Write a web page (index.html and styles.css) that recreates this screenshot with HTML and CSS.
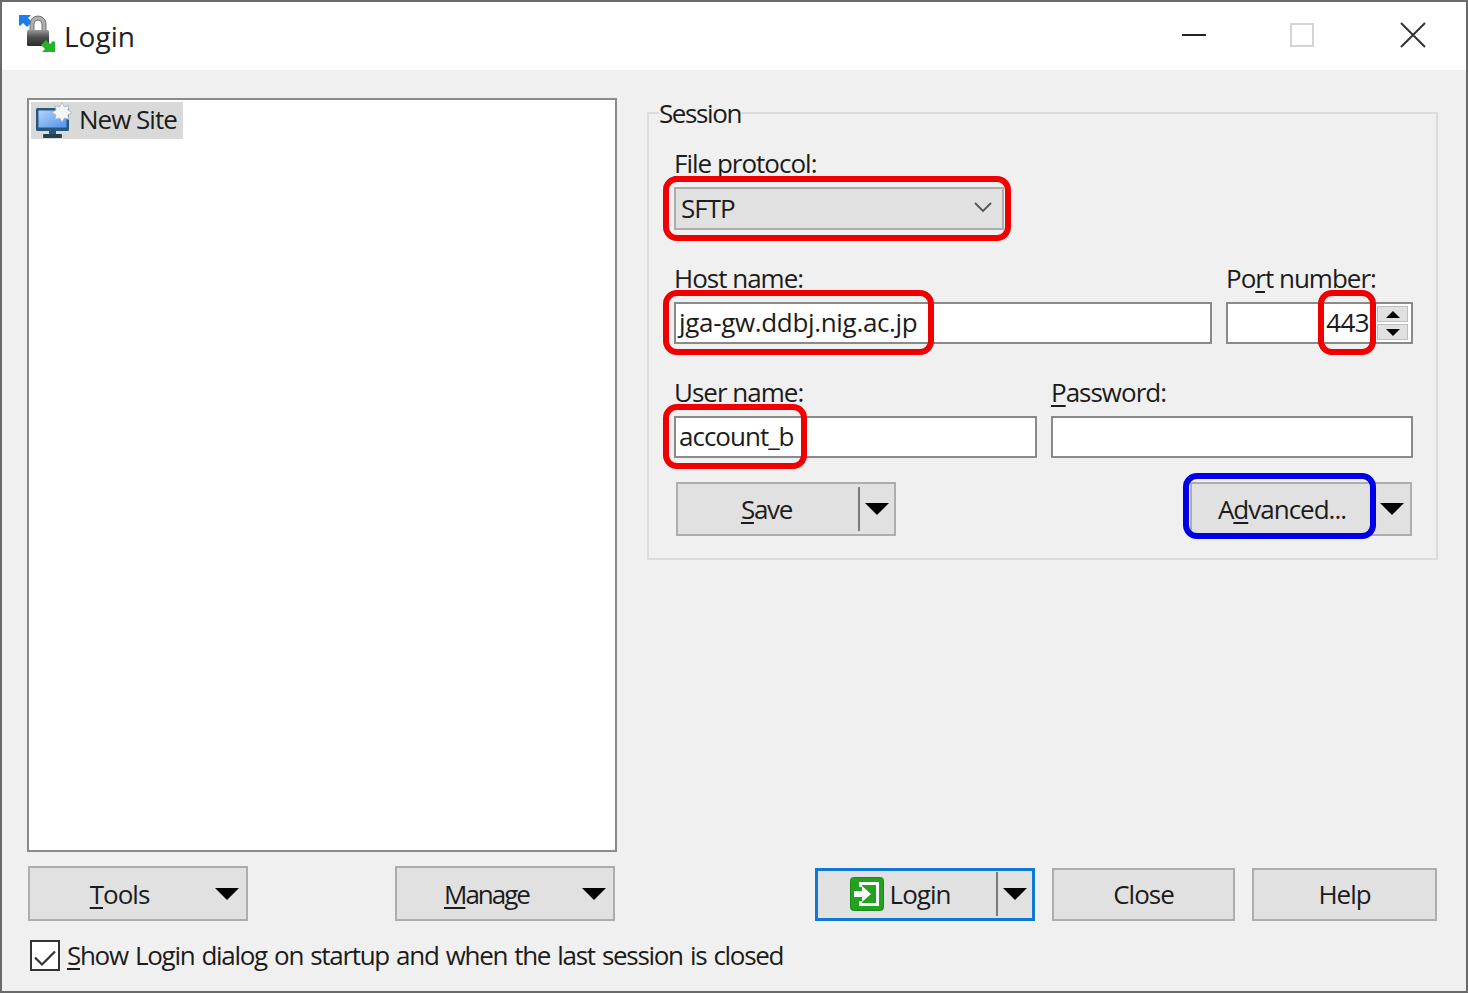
FILE: index.html
```html
<!DOCTYPE html>
<html lang="en">
<head>
<meta charset="utf-8">
<title>Login</title>
<link rel="stylesheet" href="styles.css">
</head>
<body>
<div class="dialog">
  <header class="titlebar">
    <svg class="app-icon" viewBox="0 0 38 38" width="38" height="38" aria-hidden="true">
      <defs>
        <linearGradient id="lockBody" x1="0" y1="0" x2="0" y2="1"><stop offset="0" stop-color="#999"/><stop offset=".45" stop-color="#4f4f4f"/><stop offset="1" stop-color="#2b2b2b"/></linearGradient>
        <linearGradient id="screen" x1="0" y1="0" x2="1" y2="1"><stop offset="0" stop-color="#b4d4fa"/><stop offset="1" stop-color="#4f92ea"/></linearGradient>
      </defs>
      <path d="M1 0h12l-3 3 4 4-5 5-4-4-3 3-1-1z" fill="#1f7cf0"/>
      <path d="M12 17V9a8 8 0 0 1 16 0v8h-4V9a4 4 0 0 0-8 0v8z" fill="#b0b0b0" stroke="#5a5a5a" stroke-width=".8"/>
      <rect x="9" y="15" width="22" height="16" rx="1.500" fill="url(#lockBody)"/>
      <path d="M37 37H24l3-3-4-4 5-5 4 4 3-3 2 1z" fill="#25b32c"/>
    </svg>
    <span class="title">Login</span>
    <div class="win-controls">
      <svg class="win-btn" viewBox="0 0 26 26" width="26" height="26" aria-hidden="true"><path d="M2 13h24" stroke="#222" stroke-width="2"/></svg>
      <svg class="win-btn" viewBox="0 0 26 26" width="26" height="26" aria-hidden="true"><rect x="1" y="2" width="22" height="22" fill="none" stroke="#d4d4d4" stroke-width="2"/></svg>
      <svg class="win-btn" viewBox="0 0 26 26" width="26" height="26" aria-hidden="true"><path d="M1 1l24 24M25 1L1 25" stroke="#333" stroke-width="2"/></svg>
    </div>
  </header>

  <main class="content">
    <section class="left-pane">
      <div class="tree">
        <div class="tree-item">
          <svg class="site-icon" viewBox="0 0 38 36" width="38" height="36" aria-hidden="true">
            <rect x="1" y="5" width="33" height="23" rx="1.500" fill="#27567f"/>
            <rect x="3.500" y="7.500" width="28" height="17" fill="url(#screen)"/>
            <rect x="14" y="28" width="7" height="4" fill="#27567f"/>
            <rect x="8" y="31" width="19" height="4" rx="1" fill="#27404f"/>
            <path d="M27 0l2.500 4 4.500-1.500-1 4.500 4 2.500-4 2.500 1 4.500-4.500-1.500-2.500 4-2.500-4-4.500 1.500 1-4.500-4-2.500 4-2.500-1-4.500 4.500 1.500z" fill="#f6f6f6" stroke="#9fb4c6" stroke-width=".8"/>
          </svg>
          <span class="tree-text">New Site</span>
        </div>
      </div>
      <div class="tree-actions">
        <button class="btn btn-menu" type="button"><span class="btn-label"><u>T</u>ools</span><i class="caret"></i></button>
        <button class="btn btn-menu btn-manage" type="button"><span class="btn-label"><u>M</u>anage</span><i class="caret"></i></button>
      </div>
    </section>

    <section class="right-pane">
      <fieldset class="session">
        <legend>Session</legend>
        <div class="field">
          <label class="label"><u>F</u>ile protocol:</label>
          <div class="select">
            <span>SFTP</span>
            <svg viewBox="0 0 18 11" width="18" height="11" aria-hidden="true"><path d="M1 1l8 8 8-8" fill="none" stroke="#555" stroke-width="1.800"/></svg>
          </div>
        </div>
        <div class="row row-host">
          <div class="field">
            <label class="label"><u>H</u>ost name:</label>
            <div class="input input-host">jga-gw.ddbj.nig.ac.jp</div>
          </div>
          <div class="field">
            <label class="label">Po<u>r</u>t number:</label>
            <div class="input input-port">
              <span class="port-value">443</span>
              <div class="spinner">
                <div class="spin-btn"><i class="tri-up"></i></div>
                <div class="spin-btn"><i class="tri-down"></i></div>
              </div>
            </div>
          </div>
        </div>
        <div class="row row-user">
          <div class="field">
            <label class="label"><u>U</u>ser name:</label>
            <div class="input">account_b</div>
          </div>
          <div class="field">
            <label class="label"><u>P</u>assword:</label>
            <div class="input"></div>
          </div>
        </div>
        <div class="row row-actions">
          <button class="btn btn-split btn-save" type="button"><span class="btn-label"><u>S</u>ave</span><span class="split"><i class="caret"></i></span></button>
          <button class="btn btn-menu btn-advanced" type="button"><span class="btn-label">A<u>d</u>vanced...</span><i class="caret"></i></button>
        </div>
      </fieldset>

      <div class="dialog-actions">
        <button class="btn btn-split btn-login" type="button">
          <span class="btn-label">
            <svg class="login-icon" viewBox="0 0 34 34" width="34" height="34" aria-hidden="true">
              <rect x="0.500" y="0.500" width="33" height="33" rx="3" fill="#22a31f" stroke="#1b8a1a"/>
              <path d="M9 5h20v24H9v-5h3v2h14V8H12v2H9z" fill="#fff"/>
              <path d="M4 14h8V9l9 8-9 8v-5H4z" fill="#fff"/>
            </svg>
            <span>Login</span>
          </span>
          <span class="split"><i class="caret"></i></span>
        </button>
        <button class="btn btn-close" type="button">Close</button>
        <button class="btn btn-help" type="button">Help</button>
      </div>
    </section>
  </main>

  <footer class="footer">
    <label class="check">
      <span class="checkbox">
        <svg viewBox="0 0 24 24" width="24" height="24" aria-hidden="true"><path d="M2 14.500l7 7 13-13" fill="none" stroke="#333" stroke-width="2.200"/></svg>
      </span>
      <span class="check-text"><u>S</u>how Login dialog on startup and when the last session is closed</span>
    </label>
  </footer>

  <div class="mark mark-protocol"></div>
  <div class="mark mark-host"></div>
  <div class="mark mark-port"></div>
  <div class="mark mark-user"></div>
  <div class="mark mark-advanced"></div>
</div>
</body>
</html>
```
FILE: styles.css
```css
* { box-sizing: border-box; }
html, body { margin: 0; padding: 0; }
body {
  width: 1468px;
  height: 993px;
  overflow: hidden;
  font-family: "Open Sans", "Noto Sans", sans-serif;
  font-size: 26px;
  letter-spacing: -1px;
  color: #1c1c1c;
  background: #f0f0f0;
}
u { text-decoration-thickness: 2px; text-underline-offset: 3px; text-decoration-skip-ink: none; }

.dialog {
  position: relative;
  width: 1468px;
  height: 993px;
  border: 2px solid #6a6a6a;
  background: #f0f0f0;
}

.titlebar {
  display: flex;
  align-items: center;
  height: 68px;
  padding-left: 16px;
  background: #fff;
}
.app-icon { flex: none; margin-right: 8px; margin-top: -4px; }
.title { font-size: 28px; letter-spacing: 0; color: #222; }
.win-controls { display: flex; gap: 84px; margin-left: auto; margin-right: 40px; margin-top: -2px; }
.win-btn { display: block; }

.content {
  display: grid;
  grid-template-columns: 590px 791px;
  column-gap: 30px;
  padding: 28px 0 0 25px;
}
.left-pane, .right-pane { display: flex; flex-direction: column; }
.tree {
  height: 754px;
  padding: 2px;
  background: #fff;
  border: 2px solid #8a8a8a;
}
.tree-item {
  display: inline-flex;
  align-items: center;
  gap: 6px;
  height: 37px;
  padding: 0 6px 0 4px;
  background: #d9d9d9;
}
.tree-text { margin-top: -3px; }
.tree-actions {
  display: flex;
  justify-content: space-between;
  width: 587px;
  margin: 14px 0 0 1px;
}

.btn {
  display: flex;
  align-items: center;
  justify-content: center;
  height: 54px;
  padding: 0;
  font: inherit;
  letter-spacing: inherit;
  color: inherit;
  background: #e1e1e1;
  border: 2px solid #adadad;
}
.btn-label { display: inline-flex; align-items: center; white-space: nowrap; }
.btn-menu { width: 220px; padding-right: 7px; }
.btn-menu .btn-label { flex: 1; justify-content: center; padding-right: 6px; }
.btn-manage { letter-spacing: -2px; }
.tree-actions .btn { height: 55px; }
.caret {
  display: block;
  flex: none;
  width: 0;
  height: 0;
  border-left: 12px solid transparent;
  border-right: 12px solid transparent;
  border-top: 12px solid #000;
}

.session {
  height: 462px;
  margin: 0;
  padding: 21px 24px 0 25px;
  border: 2px solid #dcdcdc;
  min-width: 0;
}
.session legend {
  margin-left: -15px;
  padding: 0;
  line-height: 30px;
  letter-spacing: -1.4px;
}
.field { display: flex; flex-direction: column; }
.label { display: block; height: 38px; line-height: 28px; white-space: nowrap; }
.select {
  display: flex;
  align-items: center;
  justify-content: space-between;
  width: 330px;
  height: 43px;
  padding: 0 10px 2px 5px;
  background: #e1e1e1;
  border: 2px solid #adadad;
}
.input {
  display: flex;
  align-items: center;
  height: 42px;
  padding: 0 3px 3px;
  background: #fff;
  border: 2px solid #8a8a8a;
}
.input-host { letter-spacing: -0.33px; }
.row { display: grid; column-gap: 14px; margin-top: 34px; }
.row-host { grid-template-columns: 538px 187px; }
.row-user { grid-template-columns: 363px 362px; }
.input-port { justify-content: flex-end; padding: 0 3px 0 0; }
.port-value { margin: 0 8px 3px 0; letter-spacing: -0.6px; }
.spinner { display: flex; flex-direction: column; gap: 2px; width: 31px; }
.spin-btn {
  display: flex;
  align-items: center;
  justify-content: center;
  height: 16px;
  background: #e1e1e1;
  border: 1px solid #bdbdbd;
}
.tri-up, .tri-down { display: block; width: 0; height: 0; border-left: 7px solid transparent; border-right: 7px solid transparent; }
.tri-up { border-bottom: 7px solid #000; }
.tri-down { border-top: 7px solid #000; }
.row-actions {
  display: flex;
  justify-content: space-between;
  width: 738px;
  margin-top: 24px;
  padding-left: 2px;
}
.btn-split { width: 220px; }
.btn-split .btn-label { flex: 1; justify-content: center; }
.btn-save .btn-label { padding-right: 3px; letter-spacing: -1.3px; }
.split {
  display: flex;
  align-items: center;
  justify-content: center;
  flex: none;
  width: 36px;
  height: 44px;
  border-left: 2px solid #7a7a7a;
}
.btn-advanced { width: 222px; padding-right: 6px; }
.btn-advanced .btn-label { padding-right: 8px; }

.footer { margin-top: 16px; padding-left: 28px; }
.check { display: flex; align-items: center; gap: 7px; }
.check-text { letter-spacing: -1.3px; word-spacing: 1.7px; }
.checkbox {
  display: flex;
  align-items: center;
  justify-content: center;
  width: 30px;
  height: 31px;
  background: #fff;
  border: 2px solid #333;
}

.dialog-actions {
  display: flex;
  justify-content: flex-end;
  gap: 17px;
  margin-top: auto;
  margin-right: 1px;
}
.dialog-actions .btn { height: 53px; padding-bottom: 2px; }
.btn-login { border: 3px solid #0f78d4; }
.btn-login .btn-label { padding-right: 14px; }
.login-icon { margin-right: 6px; }
.btn-close { width: 183px; }
.btn-help { width: 185px; }

.mark {
  position: absolute;
  border: 6px solid #f00000;
  border-radius: 14px;
  pointer-events: none;
}
.mark-protocol { left: 661px; top: 174px; width: 348px; height: 65px; }
.mark-host { left: 661px; top: 288px; width: 271px; height: 65px; }
.mark-port { left: 1316px; top: 288px; width: 58px; height: 65px; }
.mark-user { left: 661px; top: 402px; width: 144px; height: 65px; }
.mark-advanced { left: 1181px; top: 471px; width: 193px; height: 66px; border-color: #0000e6; }
```
